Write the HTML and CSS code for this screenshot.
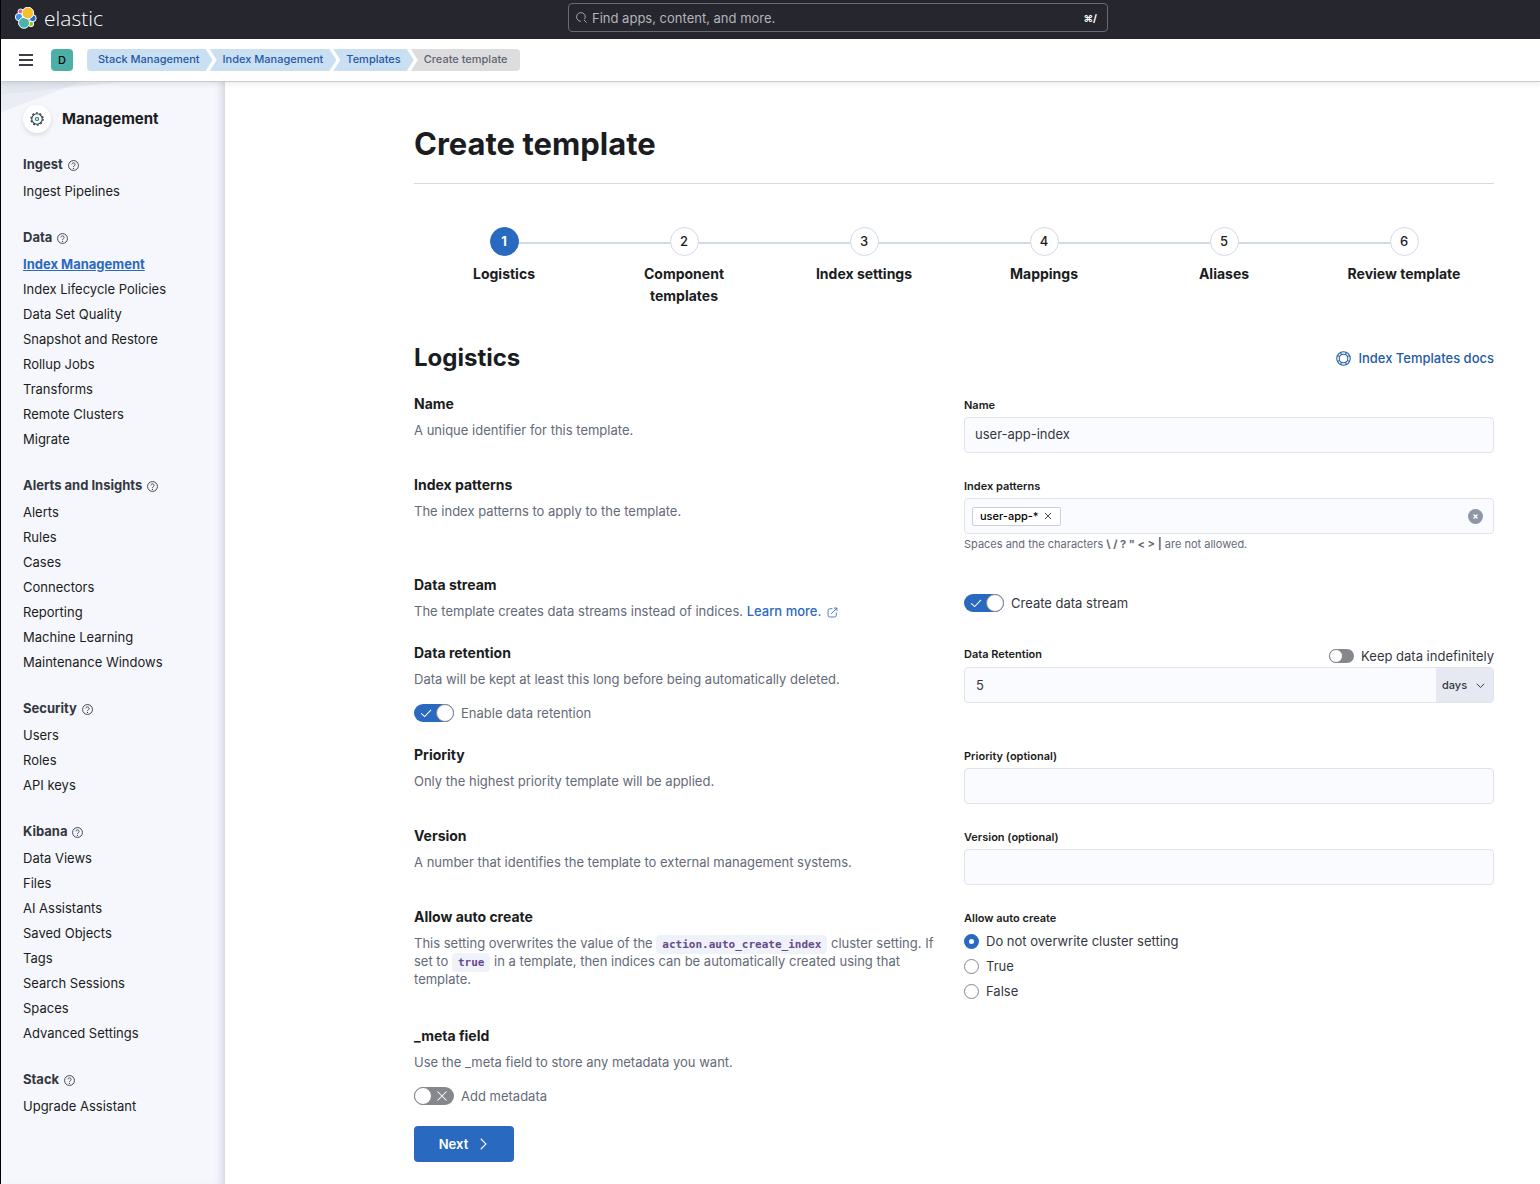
FILE: index.html
```html
<!DOCTYPE html>
<html lang="en">
<head>
<meta charset="utf-8">
<meta name="viewport" content="width=device-width, initial-scale=1">
<title>Create template - Index Management - Elastic</title>
<link rel="stylesheet" href="styles.css">
</head>
<body>
<svg class="sprite" aria-hidden="true">
  <symbol id="i-help" viewBox="0 0 16 16"><circle cx="8" cy="8" r="7.2" fill="none" stroke="currentColor" stroke-width="1.300"/><path d="M5.700 6.400a2.300 2.300 0 1 1 3.500 2C8.400 8.900 8 9.300 8 10.200" fill="none" stroke="currentColor" stroke-width="1.300"/><circle cx="8" cy="12.200" r=".9" fill="currentColor"/></symbol>
  <symbol id="i-check" viewBox="0 0 16 16"><path d="M1.500 8.500l4.700 4.200 8.500-9" fill="none" stroke="currentColor" stroke-width="1.400"/></symbol>
  <symbol id="i-cross" viewBox="0 0 16 16"><path d="M2 2l12 12M14 2L2 14" fill="none" stroke="currentColor" stroke-width="1.400"/></symbol>
</svg>

<header class="topbar">
  <a class="brand" href="#" aria-label="Elastic home">
    <svg class="brand-mark" viewBox="0 0 22 22" aria-hidden="true">
      <g stroke="#fff" stroke-width="1">
        <circle cx="5.700" cy="4.700" r="2.700" fill="#f04e98"/>
        <circle cx="17.700" cy="11.200" r="3.500" fill="#2a6ac7"/>
        <circle cx="4" cy="10" r="3.700" fill="#3f92ea"/>
        <circle cx="16" cy="17" r="2.700" fill="#93c90e"/>
        <circle cx="9" cy="15.800" r="5.500" fill="#4cb3aa"/>
        <circle cx="12.800" cy="6" r="5.800" fill="#f7bf2c"/>
      </g>
    </svg>
    <span class="brand-name">elastic</span>
  </a>
  <label class="search">
    <svg class="icon-11" viewBox="0 0 16 16" aria-hidden="true"><path d="M7.200 13.500A6.300 6.300 0 1 1 12.500 10.500M11.500 11.500l4 4" fill="none" stroke="currentColor" stroke-width="1.300"/></svg>
    <input type="search" placeholder="Find apps, content, and more." aria-label="Find apps, content, and more.">
    <kbd>⌘/</kbd>
  </label>
</header>

<div class="crumbbar">
  <button class="menu-btn" type="button" aria-label="Toggle navigation"><span></span><span></span><span></span></button>
  <button class="space-btn" type="button" aria-label="Default space">D</button>
  <nav class="crumbs" aria-label="Breadcrumbs">
    <a href="#">Stack Management</a><a href="#">Index Management</a><a href="#">Templates</a><span aria-current="page">Create template</span>
  </nav>
</div>

<div class="shell">
  <aside class="sidebar">
    <div class="side-title">
      <span class="side-icon"><svg viewBox="0 0 16 16" aria-hidden="true"><circle cx="8" cy="8" r="6" fill="none" stroke="#343741" stroke-width="1.200"/><circle cx="8" cy="8" r="7" fill="none" stroke="#343741" stroke-width="1.400" stroke-dasharray="2.200 2.198"/><circle cx="8" cy="8" r="1.800" fill="none" stroke="#017d73" stroke-width="1.200"/></svg></span>
      <h2>Management</h2>
    </div>
    <nav aria-label="Management">
      <section><h3>Ingest <svg class="icon-11"><use href="#i-help"/></svg></h3>
        <ul><li><a href="#">Ingest Pipelines</a></li></ul></section>
      <section><h3>Data <svg class="icon-11"><use href="#i-help"/></svg></h3>
        <ul>
          <li><a class="current" href="#" aria-current="page">Index Management</a></li>
          <li><a href="#">Index Lifecycle Policies</a></li>
          <li><a href="#">Data Set Quality</a></li>
          <li><a href="#">Snapshot and Restore</a></li>
          <li><a href="#">Rollup Jobs</a></li>
          <li><a href="#">Transforms</a></li>
          <li><a href="#">Remote Clusters</a></li>
          <li><a href="#">Migrate</a></li>
        </ul></section>
      <section><h3>Alerts and Insights <svg class="icon-11"><use href="#i-help"/></svg></h3>
        <ul>
          <li><a href="#">Alerts</a></li>
          <li><a href="#">Rules</a></li>
          <li><a href="#">Cases</a></li>
          <li><a href="#">Connectors</a></li>
          <li><a href="#">Reporting</a></li>
          <li><a href="#">Machine Learning</a></li>
          <li><a href="#">Maintenance Windows</a></li>
        </ul></section>
      <section><h3>Security <svg class="icon-11"><use href="#i-help"/></svg></h3>
        <ul>
          <li><a href="#">Users</a></li>
          <li><a href="#">Roles</a></li>
          <li><a href="#">API keys</a></li>
        </ul></section>
      <section><h3>Kibana <svg class="icon-11"><use href="#i-help"/></svg></h3>
        <ul>
          <li><a href="#">Data Views</a></li>
          <li><a href="#">Files</a></li>
          <li><a href="#">AI Assistants</a></li>
          <li><a href="#">Saved Objects</a></li>
          <li><a href="#">Tags</a></li>
          <li><a href="#">Search Sessions</a></li>
          <li><a href="#">Spaces</a></li>
          <li><a href="#">Advanced Settings</a></li>
        </ul></section>
      <section><h3>Stack <svg class="icon-11"><use href="#i-help"/></svg></h3>
        <ul><li><a href="#">Upgrade Assistant</a></li></ul></section>
    </nav>
  </aside>

  <main class="main">
    <div class="content">
      <h1>Create template</h1>

      <ol class="steps">
        <li class="active"><button type="button"><span class="num">1</span>Logistics</button></li>
        <li><button type="button"><span class="num">2</span>Component templates</button></li>
        <li><button type="button"><span class="num">3</span>Index settings</button></li>
        <li><button type="button"><span class="num">4</span>Mappings</button></li>
        <li><button type="button"><span class="num">5</span>Aliases</button></li>
        <li><button type="button"><span class="num">6</span>Review template</button></li>
      </ol>

      <div class="section-head">
        <h2>Logistics</h2>
        <a class="docs" href="#"><svg viewBox="0 0 16 16" aria-hidden="true"><g fill="none" stroke="currentColor" stroke-width="1.100"><circle cx="8" cy="8" r="7.200"/><circle cx="8" cy="8" r="4.600"/><path d="M5.700 4L5 1.500M10.300 4L11 1.500M5.700 12L5 14.500M10.300 12l.7 2.500M4 5.700L1.500 5M4 10.300L1.500 11M12 5.700l2.500-.7M12 10.300l2.500.7"/></g></svg>Index Templates docs</a>
      </div>

      <form class="form">
        <div class="group">
          <div class="about"><h3>Name</h3><p>A unique identifier for this template.</p></div>
          <div class="field"><label for="name">Name</label><input class="text" id="name" type="text" value="user-app-index"></div>
        </div>

        <div class="group">
          <div class="about"><h3>Index patterns</h3><p>The index patterns to apply to the template.</p></div>
          <div class="field">
            <label for="patterns">Index patterns</label>
            <div class="combo">
              <span class="pill">user-app-*<button type="button" aria-label="Remove user-app-*"><svg><use href="#i-cross"/></svg></button></span>
              <input id="patterns" type="text">
              <button class="clear" type="button" aria-label="Clear input"><svg viewBox="0 0 16 16"><path d="M3.500 3.500l9 9M12.500 3.500l-9 9" stroke="currentColor" stroke-width="3"/></svg></button>
            </div>
            <p class="help">Spaces and the characters <strong>\ / ? " &lt; &gt; |</strong> are not allowed.</p>
          </div>
        </div>

        <div class="group">
          <div class="about"><h3>Data stream</h3><p>The template creates data streams instead of indices. <a href="#">Learn more. <svg class="ext" viewBox="0 0 16 16" aria-hidden="true"><path d="M8 2.500H4A2.500 2.500 0 0 0 1.500 5v7A2.500 2.500 0 0 0 4 14.500h7a2.500 2.500 0 0 0 2.500-2.500V8M6 10l8.500-8.500M10 1.500h4.500V6" fill="none" stroke="currentColor" stroke-width="1.200"/></svg></a></p></div>
          <div class="field field-switch">
            <label class="switch"><span class="track"><input type="checkbox" role="switch" checked><svg><use href="#i-check"/></svg></span>Create data stream</label>
          </div>
        </div>

        <div class="group">
          <div class="about"><h3>Data retention</h3><p>Data will be kept at least this long before being automatically deleted.</p>
            <label class="switch"><span class="track"><input type="checkbox" role="switch" checked><svg><use href="#i-check"/></svg></span>Enable data retention</label>
          </div>
          <div class="field">
            <div class="label-row">
              <label for="retention">Data Retention</label>
              <label class="switch small"><span class="track"><input type="checkbox" role="switch"></span>Keep data indefinitely</label>
            </div>
            <div class="with-unit">
              <input id="retention" type="text" inputmode="numeric" value="5">
              <span class="unit"><select aria-label="Retention unit"><option>days</option><option>hours</option><option>minutes</option></select><svg viewBox="0 0 16 16" aria-hidden="true"><path d="M1.500 5L8 11.500 14.500 5" fill="none" stroke="currentColor" stroke-width="1.700"/></svg></span>
            </div>
          </div>
        </div>

        <div class="group">
          <div class="about"><h3>Priority</h3><p>Only the highest priority template will be applied.</p></div>
          <div class="field"><label for="priority">Priority (optional)</label><input class="text" id="priority" type="text"></div>
        </div>

        <div class="group">
          <div class="about"><h3>Version</h3><p>A number that identifies the template to external management systems.</p></div>
          <div class="field"><label for="version">Version (optional)</label><input class="text" id="version" type="text"></div>
        </div>

        <div class="group">
          <div class="about"><h3>Allow auto create</h3><p>This setting overwrites the value of the <code>action.auto_create_index</code> cluster setting. If set to <code>true</code> in a template, then indices can be automatically created using that template.</p></div>
          <fieldset class="field radios">
            <legend>Allow auto create</legend>
            <label><input type="radio" name="auto" checked>Do not overwrite cluster setting</label>
            <label><input type="radio" name="auto">True</label>
            <label><input type="radio" name="auto">False</label>
          </fieldset>
        </div>

        <div class="group">
          <div class="about"><h3>_meta field</h3><p>Use the _meta field to store any metadata you want.</p>
            <label class="switch"><span class="track"><input type="checkbox" role="switch"><svg><use href="#i-cross"/></svg></span>Add metadata</label>
          </div>
        </div>

        <button class="next" type="submit">Next<svg viewBox="0 0 16 16" aria-hidden="true"><path d="M5 1L12 8 5 15" fill="none" stroke="currentColor" stroke-width="1.500"/></svg></button>
      </form>
    </div>
  </main>
</div>
</body>
</html>
```
FILE: styles.css
```css
:root {
  --ink: #1a1c21;
  --text: #343741;
  --subdued: #646a77;
  --primary: #2a69c0;
  --link: #1f5aa6;
  --border: #d3dae6;
  --field: #fafbfe;
  --field-border: #e1e3e9;
}

*, *::before { box-sizing: border-box; }

body {
  margin: 0;
  min-height: 100vh;
  display: flex;
  flex-direction: column;
  border-left: 1px solid #000;
  background: #fff;
  color: var(--text);
  font: 13px/18px Inter, "Liberation Sans", sans-serif;
}

h1, h2, h3, p, ul, ol { margin: 0; padding: 0; }
ul, ol { list-style: none; }
a { color: inherit; text-decoration: none; }
button, input, select { font: inherit; color: inherit; margin: 0; }
button { padding: 0; border: 0; background: none; cursor: pointer; }
svg { flex: none; }
.sprite { display: none; }
.icon-11 { width: 11px; height: 11px; }

/* Top bar */
.topbar {
  display: grid;
  grid-template-columns: 567fr 540fr 432fr;
  align-items: center;
  height: 39px;
  padding-bottom: 4px;
  background: #25262e;
  color: #fff;
}
.brand { display: flex; align-items: center; gap: 7px; padding-left: 14px; }
.brand-mark { width: 22px; height: 22px; }
.brand-name { font: 300 21px/24px "Open Sans", "Noto Sans", sans-serif; }
.search {
  display: flex;
  align-items: center;
  gap: 5px;
  height: 29px;
  padding: 0 10px 0 7px;
  border: 1px solid #6a6b70;
  border-radius: 4px;
  color: #b4b5b9;
}
.search input { flex: 1; min-width: 0; padding: 0; border: 0; background: none; outline: 0; }
.search input::placeholder { color: #b4b5b9; opacity: 1; }
.search kbd { color: #fff; font: 700 10px/16px Inter, "DejaVu Sans", sans-serif; }

/* Breadcrumb bar */
.crumbbar {
  position: relative;
  z-index: 1;
  display: flex;
  align-items: center;
  height: 43px;
  padding-left: 18px;
  border-bottom: 1px solid #c9cbd2;
  background: #fff;
  box-shadow: 0 2px 6px rgba(0, 0, 0, .08);
}
.menu-btn { display: grid; gap: 3px; width: 14px; margin-right: 18px; }
.menu-btn span { height: 2px; background: #3c3e47; }
.space-btn { width: 22px; height: 22px; margin-right: 14px; border-radius: 4px; background: #4db0a8; color: #000; font-size: 11px; font-weight: 500; }
.crumbs { display: flex; font-size: 11px; font-weight: 500; line-height: 20px; }
.crumbs > * {
  margin-left: -3px;
  padding: 0 13px 2px;
  background: #cbdff2;
  color: var(--link);
  clip-path: polygon(0 0, calc(100% - 7px) 0, 100% 50%, calc(100% - 7px) 100%, 0 100%, 7px 50%);
}
.crumbs > :first-child {
  margin-left: 0;
  padding-left: 11px;
  border-radius: 4px 0 0 4px;
  clip-path: polygon(0 0, calc(100% - 7px) 0, 100% 50%, calc(100% - 7px) 100%, 0 100%);
}
.crumbs > :last-child {
  border-radius: 0 4px 4px 0;
  background: #dddde0;
  color: #5f6570;
  clip-path: polygon(0 0, 100% 0, 100% 100%, 0 100%, 7px 50%);
}

.shell { flex: 1; display: grid; grid-template-columns: 224px minmax(0, 1fr); }

/* Side navigation */
.sidebar {
  padding: 22px 22px 0;
  background:
    linear-gradient(174deg, rgba(211, 218, 230, .35) 12px, transparent 13px) no-repeat,
    linear-gradient(159deg, rgba(211, 218, 230, .35) 28px, transparent 29px) no-repeat,
    #f6f7fc;
  box-shadow: inset -8px 0 8px -6px rgba(100, 110, 140, .3);
}
.side-title { display: flex; align-items: center; gap: 11px; height: 30px; margin-bottom: 20px; }
.side-title h2 { color: var(--ink); font-size: 15px; line-height: 22px; }
.side-icon { display: grid; place-items: center; width: 28px; height: 28px; border-radius: 50%; background: #fff; box-shadow: 0 2px 5px rgba(0, 0, 0, .12); }
.side-icon svg { width: 14px; height: 14px; }
.sidebar h3 { display: flex; align-items: center; gap: 5px; font-size: 13px; line-height: 20px; }
.sidebar h3 .icon-11 { margin-top: 2px; }
.sidebar ul { padding: 5px 0 23px; }
.sidebar li { line-height: 25px; color: var(--ink); }
.sidebar .current { color: var(--primary); font-weight: 700; text-decoration: underline; }

/* Page content */
.main { padding: 41px 46px 22px; }
.content { max-width: 1080px; margin-left: auto; }
h1 { padding-bottom: 18px; border-bottom: 1px solid var(--border); color: var(--ink); font-size: 31px; line-height: 42px; }

.steps { display: grid; grid-template-columns: repeat(6, 1fr); margin-top: 43px; }
.steps li {
  display: flex;
  justify-content: center;
  background: linear-gradient(var(--border), var(--border)) no-repeat 0 15px / 100% 2px;
}
.steps li:first-child { background-position: 100% 15px; background-size: 50% 2px; }
.steps li:last-child { background-size: 50% 2px; }
.steps button { width: 120px; display: flex; flex-direction: column; align-items: center; gap: 7px; color: var(--ink); font-size: 14px; font-weight: 700; line-height: 22px; }
.steps .num { width: 29px; border: 1px solid var(--border); border-radius: 50%; background: #fff; font-size: 13px; font-weight: 500; line-height: 27px; }
.steps .active .num { border-color: var(--primary); background: var(--primary); color: #fff; font-weight: 700; }

.section-head { display: flex; justify-content: space-between; align-items: center; margin: 35px 0 19px; }
.section-head h2 { color: var(--ink); font-size: 24px; line-height: 32px; }
.docs { display: flex; align-items: center; gap: 7px; color: var(--link); font-weight: 500; }
.docs svg { width: 15px; height: 15px; }

/* Form */
.group { display: grid; grid-template-columns: 1fr 1fr; gap: 20px; margin-bottom: 21px; }
.group:last-of-type { margin-bottom: 20px; }
.about { color: var(--subdued); }
.about h3 { margin-bottom: 6px; color: var(--ink); font-size: 14px; line-height: 22px; }
.about p { padding-bottom: 1px; }
.about p a { color: var(--primary); font-weight: 500; }
.about .switch { margin-top: 14px; }
.ext { width: 11px; height: 11px; margin-left: 2px; vertical-align: -2px; }
code { padding: 3px 6px; border-radius: 4px; background: #f0f2f9; color: #664b8d; font: 700 11px/14px "DejaVu Sans Mono", monospace; }

.field { min-width: 0; padding-top: 4px; }
.field > label:not(.switch), .label-row > label:first-child, legend {
  display: block; padding: 0; color: var(--ink); font-size: 11px; font-weight: 600; line-height: 16px;
}
.text, .combo, .with-unit { width: 100%; height: 36px; border: 1px solid var(--field-border); border-radius: 4px; background: var(--field); }
.text { display: block; margin-top: 4px; padding: 0 10px 2px; }
.combo { display: flex; align-items: center; margin-top: 4px; padding: 0 10px 0 7px; }
.combo input { flex: 1; min-width: 0; border: 0; background: none; outline: 0; }
.pill { display: flex; align-items: center; gap: 5px; height: 19px; padding: 0 8px 0 7px; border: 1px solid #c9cfdc; border-radius: 2px; background: #fff; color: #000; font-size: 11px; font-weight: 500; }
.pill button { display: flex; }
.pill svg { width: 8px; height: 8px; }
.clear { display: grid; place-items: center; width: 15px; height: 15px; border-radius: 50%; background: #8f96a6; color: #fff; }
.clear svg { width: 7px; height: 7px; }
.help { padding: 3px 0 2px; color: var(--subdued); font-size: 11px; line-height: 14px; }

.switch { display: flex; align-items: center; gap: 7px; line-height: 20px; }
.field-switch { padding-top: 19px; }
.track { display: grid; align-items: center; }
.track > * { grid-area: 1 / 1; }
.track input { display: flex; width: 40px; height: 18px; appearance: none; border-radius: 9px; background: #85878c; }
.track input::before { content: ""; width: 18px; height: 18px; border: 1px solid #85878c; border-radius: 50%; background: #fff; }
.track input:checked { justify-content: flex-end; background: var(--primary); }
.track svg { width: 12px; height: 12px; margin-left: 6px; color: #fff; pointer-events: none; }
.track input:not(:checked) + svg { margin-left: 22px; }
.small .track input { width: 25px; height: 14px; }
.small .track input::before { width: 14px; height: 14px; }
.label-row { display: flex; justify-content: space-between; align-items: flex-start; height: 21px; }

.with-unit { display: flex; overflow: hidden; }
.with-unit input { flex: 1; min-width: 0; padding: 0 11px; border: 0; background: none; outline: 0; }
.unit { position: relative; display: flex; align-items: center; background: #e6e9f1; }
.unit select { width: 57px; height: 100%; padding: 0 6px; border: 0; appearance: none; background: none; font-size: 11px; font-weight: 500; }
.unit svg { position: absolute; right: 8px; width: 9px; height: 9px; pointer-events: none; }

.radios { margin: 0; padding-bottom: 0; padding-left: 0; padding-right: 0; border: 0; }
.radios legend { float: left; width: 100%; margin-bottom: 3px; }
.radios label:not(.switch) { clear: both; display: flex; align-items: center; gap: 7px; color: var(--text); font-size: 13px; font-weight: 400; line-height: 25px; }
.radios input { width: 15px; height: 15px; appearance: none; border: 1px solid #85878c; border-radius: 50%; background: #fff; }
.radios input:checked { border: 5px solid var(--primary); }

.next { display: flex; align-items: center; justify-content: center; gap: 9px; width: 100px; height: 36px; border-radius: 4px; background: var(--primary); color: #fff; font-weight: 600; }
.next svg { width: 12px; height: 12px; }
```
